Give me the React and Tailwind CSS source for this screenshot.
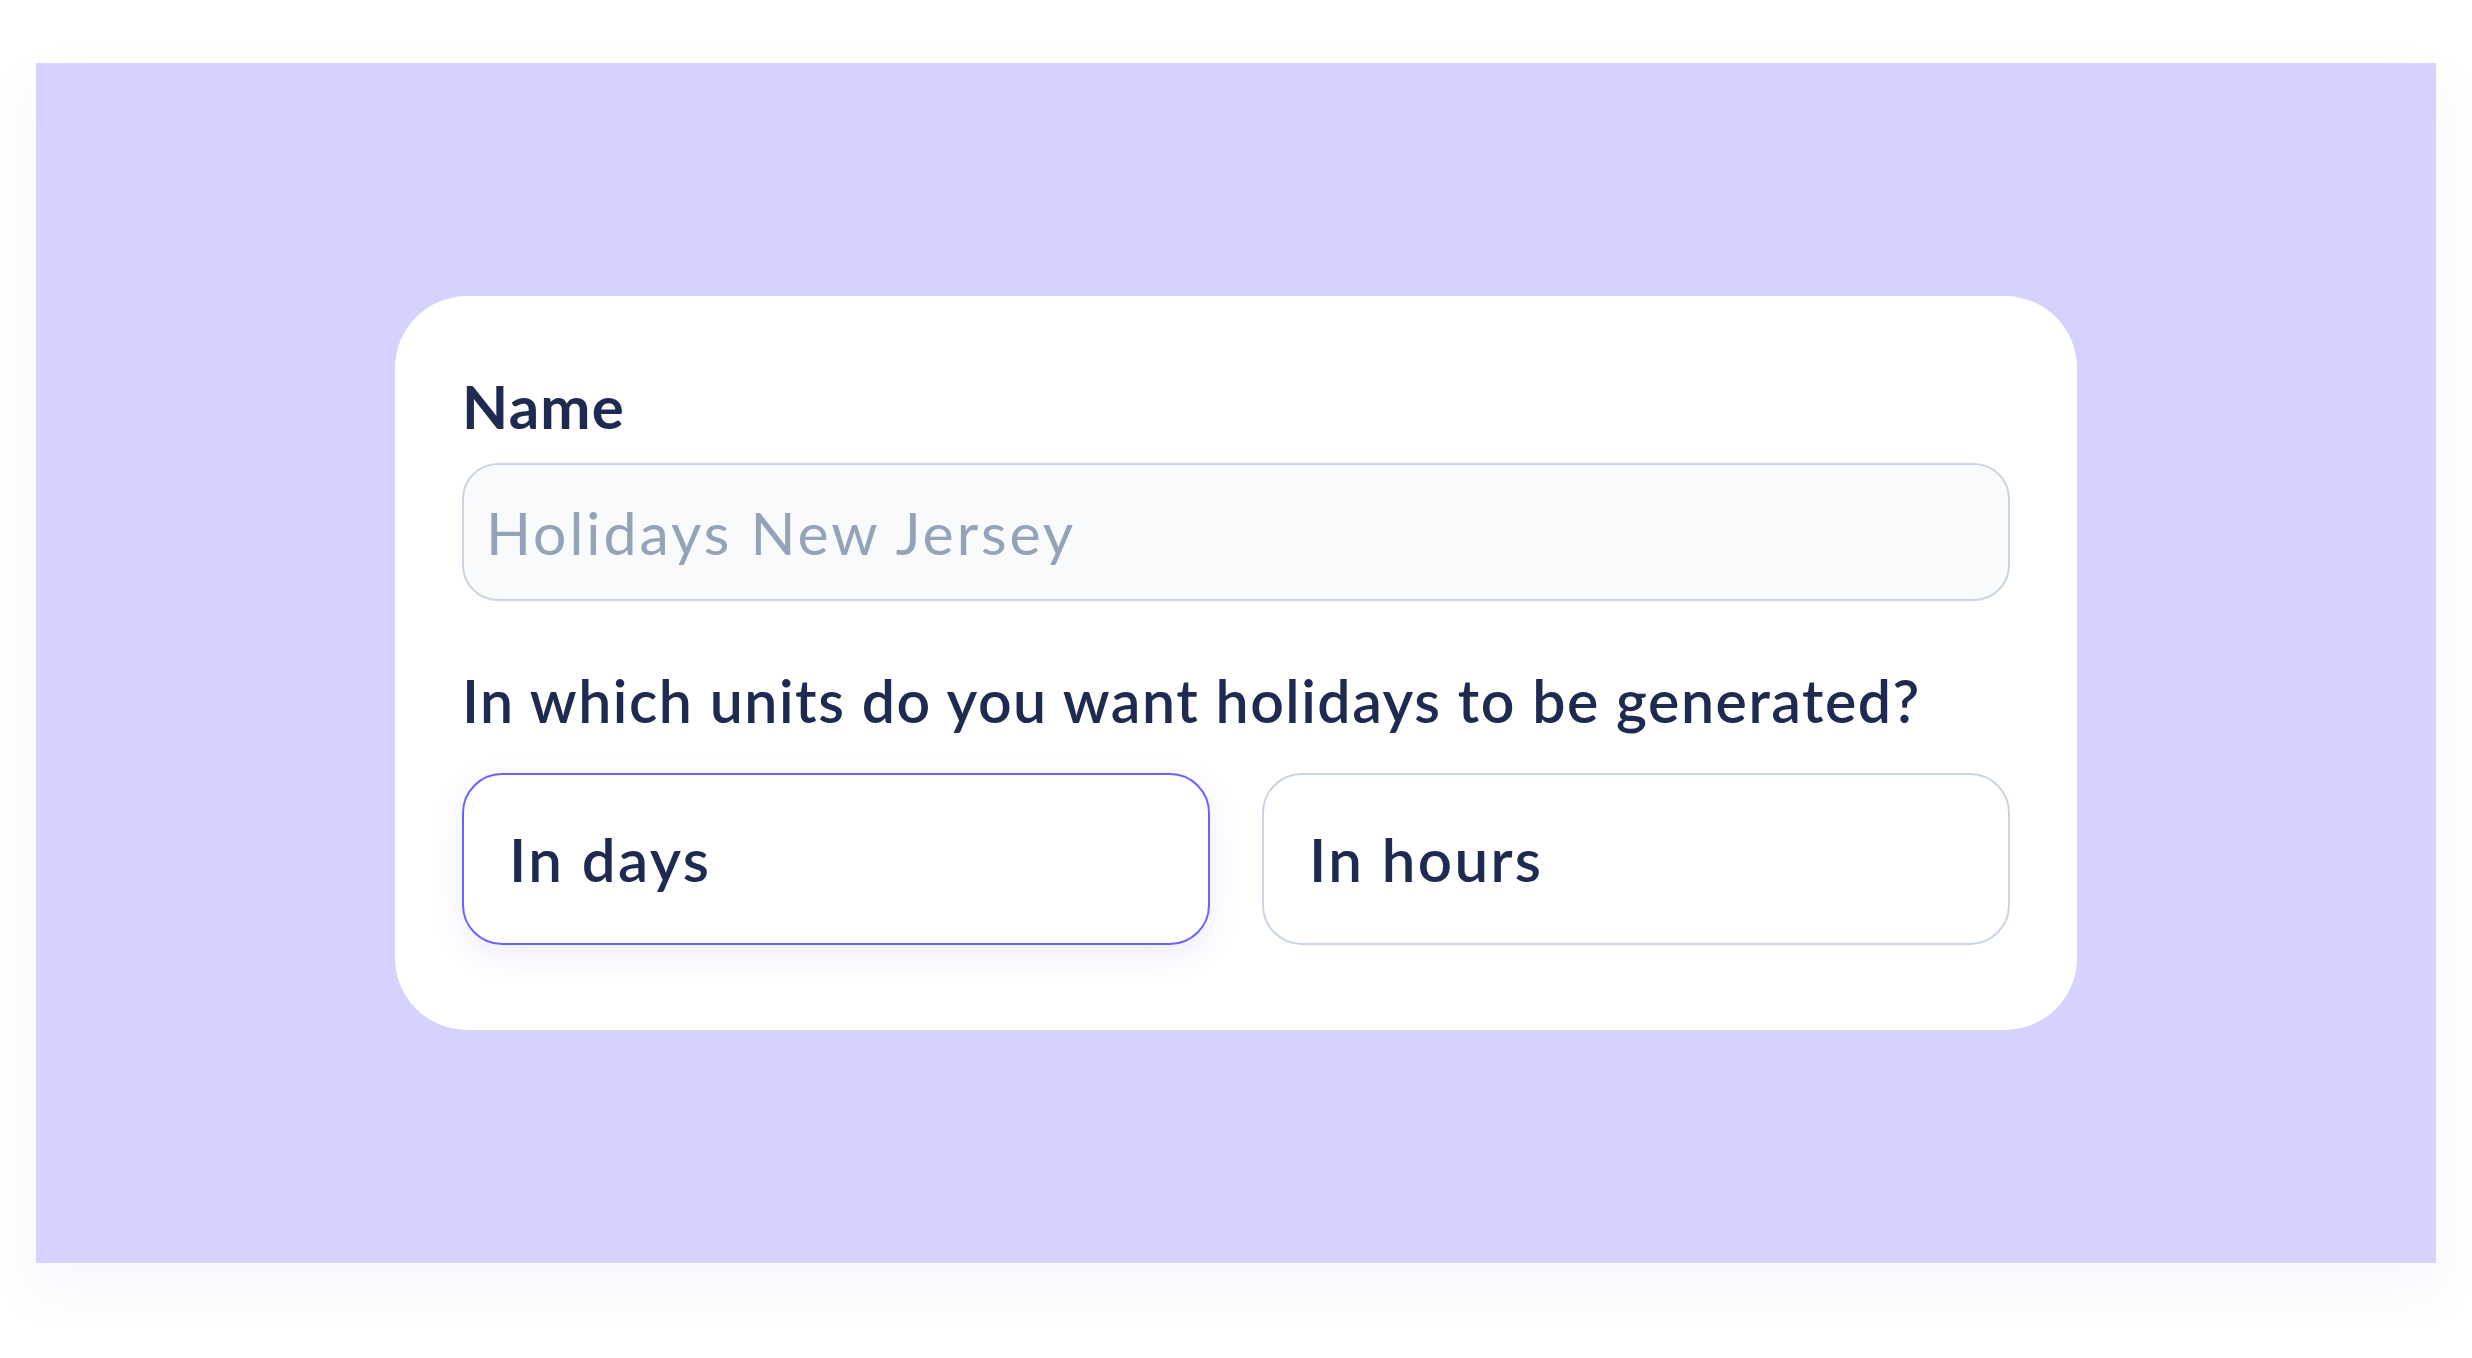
import React from "react";

const font = { fontFamily: "Lato, 'Noto Sans', sans-serif" };

function Choice({ label, selected }) {
  return (
    <button
      className={
        "flex h-[172px] flex-1 items-center rounded-[40px] border-2 bg-white pl-[45px] text-left text-[60px] font-semibold leading-none tracking-[0.04em] text-[#1F2A50] " +
        (selected
          ? "border-[#6C63FF] shadow-[0_10px_30px_rgba(108,99,255,0.12)]"
          : "border-[#CBD5E1]")
      }
    >
      {label}
    </button>
  );
}

export default function App() {
  return (
    <div className="min-h-screen w-full bg-white pl-[36px] pt-[63px]" style={font}>
      <div className="flex h-[1200px] w-[2400px] items-center justify-center bg-[#D5D2FE] shadow-[0_24px_50px_rgba(120,110,230,0.07)]">
        <div className="h-[734px] w-[1682px] rounded-[72px] bg-white px-[67px] pt-[80px]">
          <p className="text-[60px] font-bold leading-none tracking-[0.02em] text-[#1F2A50]">Name</p>

          <div className="mt-[27px] flex h-[138px] items-center rounded-[36px] border-2 border-[#CBD5E1] bg-[#F8FAFC] pl-[22px]">
            <span className="text-[59px] leading-none tracking-[0.05em] text-[#94A3B8]">Holidays New Jersey</span>
          </div>

          <p className="mt-[70px] text-[59px] font-semibold leading-none tracking-[0.026em] text-[#1F2A50]">
            In which units do you want holidays to be generated?
          </p>

          <div className="mt-[43px] flex gap-[52px]">
            <Choice label="In days" selected />
            <Choice label="In hours" />
          </div>
        </div>
      </div>
    </div>
  );
}
